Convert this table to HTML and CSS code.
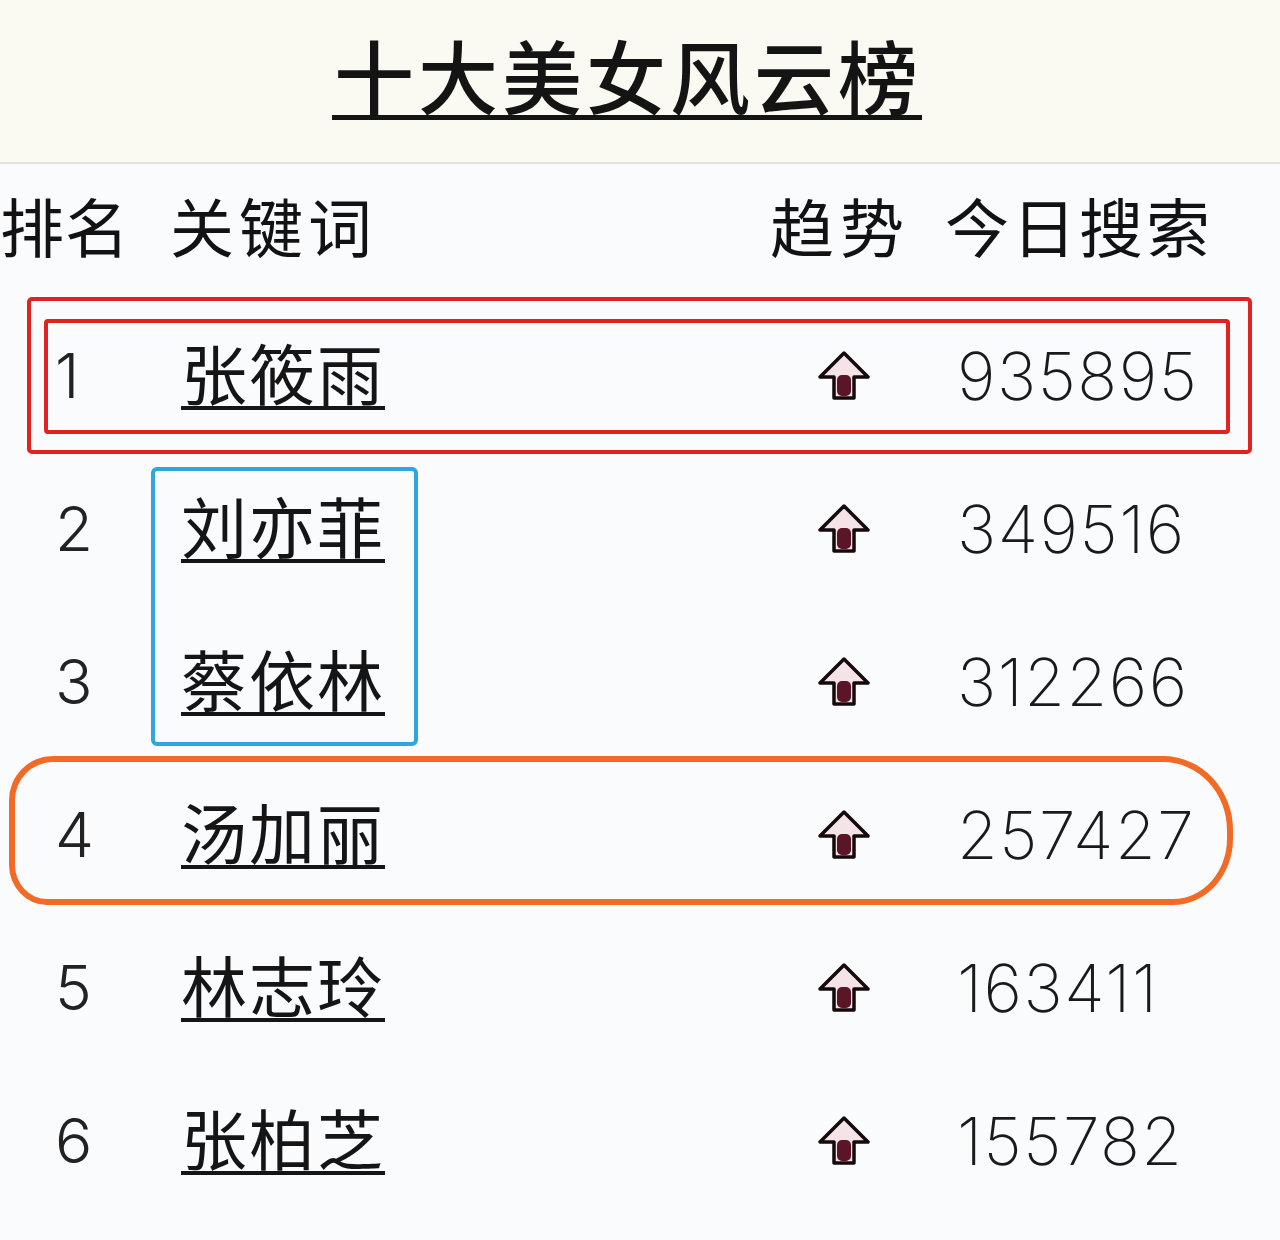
FILE: index.html
```html
<!DOCTYPE html>
<html lang="zh-CN">
<head>
<meta charset="utf-8">
<title>十大美女风云榜</title>
<link rel="stylesheet" href="styles.css">
</head>
<body>
<div class="page">
  <header class="title-wrap">
    <h1 class="title"><span class="title-text">十大美女风云榜</span></h1>
  </header>
  <div class="rule"></div>

  <div class="table">
    <div class="thead">
      <div class="th th-rank">排名</div>
      <div class="th th-name">关键词</div>
      <div class="th th-trend">趋势</div>
      <div class="th th-count">今日搜索</div>
    </div>

    <div class="row">
      <div class="rank">1</div>
      <div class="name"><span>张筱雨</span></div>
      <div class="trend"><svg class="arrow" viewBox="0 0 52 50"><polygon class="arrow-out" points="26,2 50,26 36,26 36,47 16,47 16,26 2,26"/><rect class="arrow-shaft" x="19" y="24" width="14" height="21" rx="5"/></svg></div>
      <div class="count">935895</div>
    </div>
    <div class="row">
      <div class="rank">2</div>
      <div class="name"><span>刘亦菲</span></div>
      <div class="trend"><svg class="arrow" viewBox="0 0 52 50"><polygon class="arrow-out" points="26,2 50,26 36,26 36,47 16,47 16,26 2,26"/><rect class="arrow-shaft" x="19" y="24" width="14" height="21" rx="5"/></svg></div>
      <div class="count">349516</div>
    </div>
    <div class="row">
      <div class="rank">3</div>
      <div class="name"><span>蔡依林</span></div>
      <div class="trend"><svg class="arrow" viewBox="0 0 52 50"><polygon class="arrow-out" points="26,2 50,26 36,26 36,47 16,47 16,26 2,26"/><rect class="arrow-shaft" x="19" y="24" width="14" height="21" rx="5"/></svg></div>
      <div class="count">312266</div>
    </div>
    <div class="row">
      <div class="rank">4</div>
      <div class="name"><span>汤加丽</span></div>
      <div class="trend"><svg class="arrow" viewBox="0 0 52 50"><polygon class="arrow-out" points="26,2 50,26 36,26 36,47 16,47 16,26 2,26"/><rect class="arrow-shaft" x="19" y="24" width="14" height="21" rx="5"/></svg></div>
      <div class="count">257427</div>
    </div>
    <div class="row">
      <div class="rank">5</div>
      <div class="name"><span>林志玲</span></div>
      <div class="trend"><svg class="arrow" viewBox="0 0 52 50"><polygon class="arrow-out" points="26,2 50,26 36,26 36,47 16,47 16,26 2,26"/><rect class="arrow-shaft" x="19" y="24" width="14" height="21" rx="5"/></svg></div>
      <div class="count">163411</div>
    </div>
    <div class="row">
      <div class="rank">6</div>
      <div class="name"><span>张柏芝</span></div>
      <div class="trend"><svg class="arrow" viewBox="0 0 52 50"><polygon class="arrow-out" points="26,2 50,26 36,26 36,47 16,47 16,26 2,26"/><rect class="arrow-shaft" x="19" y="24" width="14" height="21" rx="5"/></svg></div>
      <div class="count">155782</div>
    </div>
  </div>

  <div class="mark mark-red-outer"></div>
  <div class="mark mark-red-inner"></div>
  <div class="mark mark-blue"></div>
  <div class="mark mark-orange"></div>
</div>
</body>
</html>
```

FILE: styles.css
```css
* { box-sizing: border-box; }

html, body {
  margin: 0;
  padding: 0;
  background: #f9fbfd;
}

.page {
  position: relative;
  width: 1280px;
  height: 1240px;
  overflow: hidden;
  background: #f9fbfd;
  font-family: "Noto Sans CJK SC", "Noto Sans", sans-serif;
  color: #141414;
}

.title-wrap {
  height: 162px;
  background: #fafaf3;
  padding-top: 33px;
  padding-right: 26px;
  display: flex;
  justify-content: center;
}

.title {
  margin: 0;
  font-size: 80px;
  line-height: 80px;
  font-weight: 500;
  letter-spacing: 4px;
}

.title-text {
  display: inline-block;
  padding-bottom: 2px;
  border-bottom: 5px solid #141414;
  padding-left: 2px;
}

.rule {
  height: 2px;
  background: #e2e3e2;
}

.table {
  display: flex;
  flex-direction: column;
}

.thead {
  display: grid;
  grid-template-columns: 170px 600px 175px 335px;
  height: 135px;
  padding-top: 28px;
  font-size: 64px;
  line-height: 64px;
  color: #121212;
  white-space: nowrap;
}

.th-rank { letter-spacing: 1px; }
.th-name { letter-spacing: 5px; }
.th-trend { letter-spacing: 6px; }
.th-count { letter-spacing: 3px; }

.row {
  display: grid;
  grid-template-columns: 170px 600px 175px 335px;
  align-items: center;
  height: 153px;
}

.rank {
  padding-left: 55px;
  font-family: "Inter", "DejaVu Sans", sans-serif;
  font-weight: 300;
  font-size: 62px;
  color: #222;
}

.name {
  padding-left: 11px;
  margin-bottom: 6px;
  font-size: 66px;
  line-height: 70px;
  color: #151515;
}

.name span {
  display: inline-block;
  letter-spacing: 2px;
  border-bottom: 4px solid #151515;
  padding-bottom: 3px;
  line-height: 64px;
}

.trend {
  padding-left: 48px;
  display: flex;
  align-items: center;
}

.arrow {
  width: 52px;
  height: 50px;
  display: block;
}

.arrow-out {
  fill: #f4e4e8;
  stroke: #140a0c;
  stroke-width: 3.5;
  stroke-linejoin: round;
}

.arrow-shaft {
  fill: #5c1526;
}

.count {
  padding-left: 12px;
  font-family: "Inter", "DejaVu Sans", sans-serif;
  font-weight: 200;
  font-size: 66px;
  letter-spacing: 1.5px;
  color: #1a1a1a;
}

.mark {
  position: absolute;
  pointer-events: none;
}

.mark-red-outer {
  left: 27px;
  top: 297px;
  width: 1225px;
  height: 157px;
  border: 4px solid #e1221f;
  border-radius: 5px;
}

.mark-red-inner {
  left: 44px;
  top: 319px;
  width: 1186px;
  height: 115px;
  border: 4px solid #e1221f;
  border-radius: 4px;
}

.mark-blue {
  left: 151px;
  top: 467px;
  width: 267px;
  height: 279px;
  border: 4px solid #2fa6e0;
  border-radius: 6px;
}

.mark-orange {
  left: 9px;
  top: 756px;
  width: 1224px;
  height: 149px;
  border: 6px solid #f26b26;
  border-radius: 44px 70px 60px 38px / 44px 74px 66px 40px;
}
```
